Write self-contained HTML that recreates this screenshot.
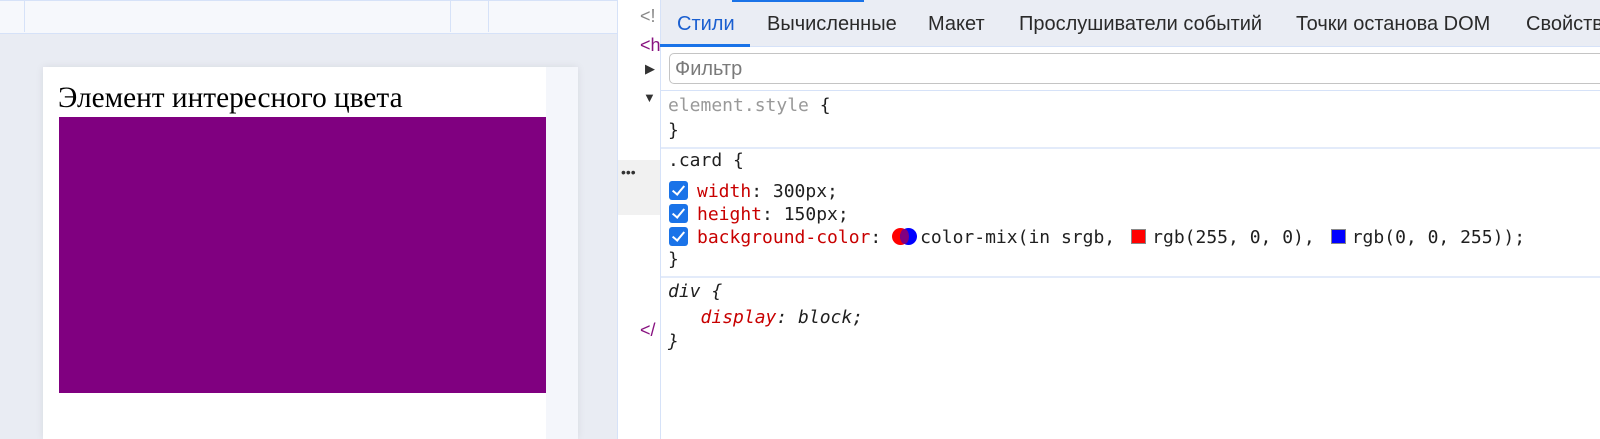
<!DOCTYPE html>
<html><head><meta charset="utf-8"><style>
*{margin:0;padding:0;box-sizing:border-box}
body{width:1600px;height:439px;overflow:hidden;position:relative;background:#fff;font-family:"Liberation Sans",sans-serif}
.a{position:absolute}
.mono{font-family:"DejaVu Sans Mono","Liberation Mono",monospace;font-size:18px;line-height:22px;color:#1f1f1f;white-space:pre}
.r{color:#c80000}
.cb{display:inline-block;width:19px;height:19px;background:#1a73e8;border-radius:3px;vertical-align:-3px;margin-right:9px;position:relative}
.cb:after{content:"";position:absolute;left:6px;top:2px;width:5px;height:10px;border:solid #fff;border-width:0 2.5px 2.5px 0;transform:rotate(40deg)}
.sw{display:inline-block;width:15px;height:15px;vertical-align:-1px;margin:0 6px 0 16px;border:1px solid #888}
.tab{position:absolute;top:13px;font-size:20px;color:#2a2a2a;white-space:nowrap}
</style></head><body>
<div class="a" style="left:0;top:0;width:617px;height:439px;background:#e9ecf3"></div>
<div class="a" style="left:0;top:0;width:617px;height:34px;background:#f6f8fc;border-top:1px solid #d6e2f8;border-bottom:1px solid #d6e2f8"></div>
<div class="a" style="left:24px;top:0;width:1px;height:32px;background:#d6e2f8"></div>
<div class="a" style="left:450px;top:0;width:1px;height:32px;background:#d6e2f8"></div>
<div class="a" style="left:488px;top:0;width:1px;height:32px;background:#d6e2f8"></div>
<div class="a" style="left:43px;top:67px;width:535px;height:372px;background:#fff;box-shadow:0 0 8px rgba(0,0,0,.08)"></div>
<div class="a" style="left:546px;top:67px;width:32px;height:372px;background:#f4f6fb"></div>
<div class="a" style="left:58px;top:82px;font-family:'Liberation Serif',serif;font-size:29.3px;color:#000;white-space:nowrap">Элемент интересного цвета</div>
<div class="a" style="left:59px;top:117px;width:487px;height:276px;background:#800080"></div>
<div class="a" style="left:617px;top:0;width:43px;height:439px;background:#fff;border-left:1px solid #d6e2f8"></div>
<div class="a" style="left:618px;top:160px;width:42px;height:55px;background:#f1f1f1"></div>
<div class="a" style="left:621px;top:164px;font-size:14px;color:#333">•••</div>
<div class="a" style="left:640px;top:6px;font-size:18px;color:#888">&lt;!</div>
<div class="a" style="left:640px;top:35px;font-size:18px;color:#881280">&lt;h</div>
<div class="a" style="left:645px;top:61px;font-size:13px;color:#333">▶</div>
<div class="a" style="left:643px;top:90px;font-size:13px;color:#333">▼</div>
<div class="a" style="left:640px;top:320px;font-size:18px;color:#881280">&lt;/</div>
<div class="a" style="left:660px;top:0;width:940px;height:47px;background:#eaedf4;border-left:1px solid #d6e2f8;border-bottom:1px solid #d6e2f8"></div>
<div class="a" style="left:732px;top:0;width:132px;height:2px;background:#1a73e8"></div>
<div class="a" style="left:660px;top:44px;width:90px;height:3px;background:#1a73e8"></div>
<div class="tab" style="left:677px;color:#1a5fd0">Стили</div>
<div class="tab" style="left:767px">Вычисленные</div>
<div class="tab" style="left:928px">Макет</div>
<div class="tab" style="left:1019px">Прослушиватели событий</div>
<div class="tab" style="left:1296px">Точки останова DOM</div>
<div class="tab" style="left:1526px">Свойства</div>
<div class="a" style="left:660px;top:47px;width:1px;height:392px;background:#d6e2f8"></div>
<div class="a" style="left:669px;top:53px;width:960px;height:31px;border:1px solid #c4c4c4;border-radius:5px;background:#fff"></div>
<div class="a" style="left:675px;top:58px;font-size:20px;color:#7a7a7a">Фильтр</div>
<div class="a" style="left:661px;top:90px;width:939px;height:1px;background:#d6e2f8"></div>
<div class="a" style="left:661px;top:147px;width:939px;height:2px;background:#e3ebfa"></div>
<div class="a" style="left:661px;top:276px;width:939px;height:2px;background:#e3ebfa"></div>
<div class="a mono" style="left:668px;top:95px;color:#999">element.style <span style="color:#1f1f1f">{</span></div>
<div class="a mono" style="left:668px;top:120px">}</div>
<div class="a mono" style="left:668px;top:150px">.card {</div>
<div class="a mono" style="left:669px;top:181px"><span class="cb"></span><span class="r">width</span>: 300px;</div>
<div class="a mono" style="left:669px;top:204px"><span class="cb"></span><span class="r">height</span>: 150px;</div>
<div class="a mono" style="left:669px;top:227px"><span class="cb"></span><span class="r">background-color</span>: <span style="display:inline-block;position:relative;width:28px;height:17px;vertical-align:-2px"><span style="position:absolute;left:0;top:0;width:17px;height:17px;border-radius:50%;background:#f00"></span><span style="position:absolute;left:8px;top:0;width:17px;height:17px;border-radius:50%;background:#00f"></span><span style="position:absolute;left:8px;top:1px;width:9px;height:15px;border-radius:50%;background:#800080"></span></span>color-mix(in srgb,<span class="sw" style="background:#f00"></span>rgb(255, 0, 0),<span class="sw" style="background:#00f"></span>rgb(0, 0, 255));</div>
<div class="a mono" style="left:668px;top:249px">}</div>
<div class="a mono" style="left:668px;top:281px;font-style:italic">div {</div>
<div class="a mono" style="left:668px;top:307px;font-style:italic">   <span class="r">display</span>: block;</div>
<div class="a mono" style="left:668px;top:331px;font-style:italic">}</div>
</body></html>
